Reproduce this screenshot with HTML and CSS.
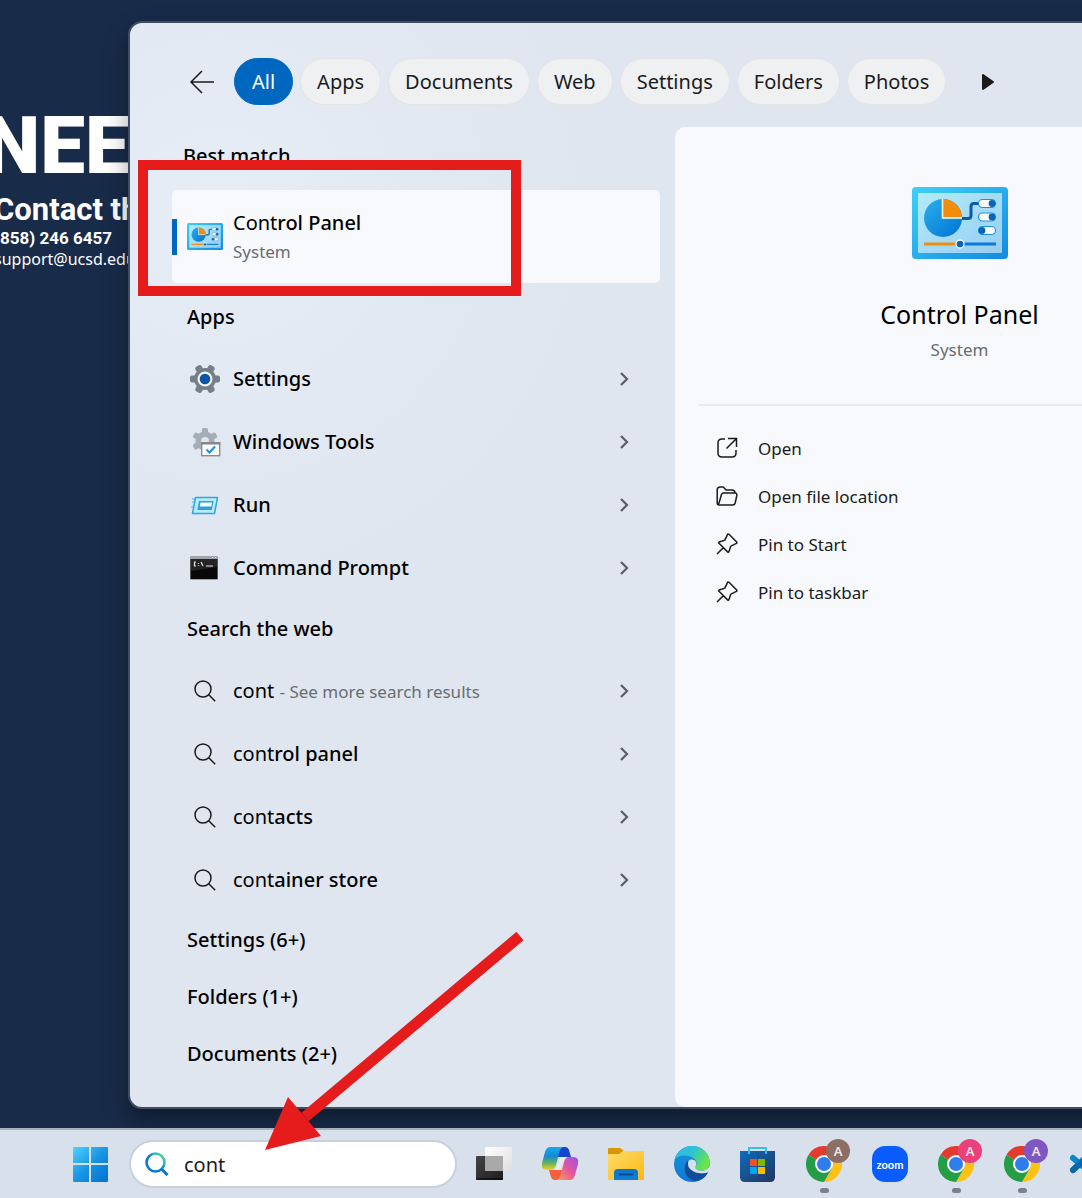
FILE: index.html
```html
<!DOCTYPE html>
<html lang="en">
<head>
  <meta charset="UTF-8" />
  <meta name="viewport" content="width=device-width, initial-scale=1" />
  <title>Search</title>
  <link rel="stylesheet" href="styles.css">
</head>
<body>
  <!-- Shared icons -->
  <svg class="sprite" aria-hidden="true">
    <defs>
      <linearGradient id="cpFrame" x1="0" y1="0" x2="1" y2="1">
        <stop offset="0" stop-color="#3fd0f8" /><stop offset="1" stop-color="#128be0" />
      </linearGradient>
      <linearGradient id="cpInner" x1="0" y1="0" x2="1" y2="1">
        <stop offset="0" stop-color="#b2ebfa" /><stop offset="1" stop-color="#97cdf2" />
      </linearGradient>
      <linearGradient id="cpPie" x1="0" y1="0" x2="1" y2="1">
        <stop offset="0" stop-color="#2bb0ea" /><stop offset="1" stop-color="#0072d4" />
      </linearGradient>
      <linearGradient id="winFill" x1="0" y1="0" x2="1" y2="1">
        <stop offset="0" stop-color="#4fd3ff" /><stop offset=".5" stop-color="#1a94e4" /><stop offset="1" stop-color="#0070d0" />
      </linearGradient>
      <linearGradient id="lensFill" x1="0" y1="1" x2="1" y2="0">
        <stop offset=".5" stop-color="#0a78d4" /><stop offset=".75" stop-color="#37c0b4" /><stop offset="1" stop-color="#65df70" />
      </linearGradient>
      <linearGradient id="darkPane" x1="0" y1="0" x2="1" y2="1">
        <stop offset="0" stop-color="#454545" /><stop offset="1" stop-color="#1d1d1d" />
      </linearGradient>
      <linearGradient id="lightPane" x1="0" y1="0" x2="1" y2="1">
        <stop offset="0" stop-color="#ffffff" /><stop offset="1" stop-color="#dedede" />
      </linearGradient>
      <linearGradient id="copLeft" x1="0" y1="0" x2="0" y2="1">
        <stop offset="0" stop-color="#17a9f2" /><stop offset=".4" stop-color="#1489d2" /><stop offset=".7" stop-color="#63b45d" /><stop offset="1" stop-color="#f5cf24" />
      </linearGradient>
      <linearGradient id="copRight" x1="1" y1="0" x2="0" y2="1">
        <stop offset="0" stop-color="#9a4ff0" /><stop offset=".5" stop-color="#e4579e" /><stop offset="1" stop-color="#ff9d5c" />
      </linearGradient>
      <linearGradient id="folderFill" x1="0" y1="0" x2="1" y2="1">
        <stop offset="0" stop-color="#ffdc6c" /><stop offset="1" stop-color="#fbb912" />
      </linearGradient>
      <linearGradient id="folderBlue" x1="0" y1="0" x2="0" y2="1">
        <stop offset="0" stop-color="#1173c8" /><stop offset="1" stop-color="#0a80d8" />
      </linearGradient>
      <linearGradient id="edgeTop" x1="0" y1="0" x2="1" y2="0.5">
        <stop offset="0" stop-color="#35b3ee" /><stop offset=".5" stop-color="#2cc3d2" /><stop offset="1" stop-color="#6be548" />
      </linearGradient>
      <linearGradient id="edgeBody" x1="0" y1="0" x2="0" y2="1">
        <stop offset="0" stop-color="#1595d8" /><stop offset="1" stop-color="#0f78d6" />
      </linearGradient>
      <linearGradient id="storeFill" x1="0" y1="0" x2="1" y2="1">
        <stop offset="0" stop-color="#0f6bbd" /><stop offset="1" stop-color="#21365f" />
      </linearGradient>
    </defs>
    <symbol id="control-panel" viewBox="0 0 96 72">
      <rect width="96" height="72" rx="4" fill="url(#cpFrame)" />
      <rect x="6" y="6" width="84" height="60" rx="1" fill="url(#cpInner)" />
      <path d="M48 31.500h8q3 0 3-3v-9q0-3 3-3h8" fill="none" stroke="#0b5ba8" stroke-width="3" />
      <circle cx="31" cy="31" r="19" fill="url(#cpPie)" />
      <path d="M31 12a19 19 0 0 1 19 19H31z" fill="#f28d0c" />
      <path d="M30.500 12v19H50" fill="none" stroke="#fff" stroke-width="1.500" />
      <g fill="#fff" stroke="#1991de" stroke-width="1.200">
        <rect x="66.500" y="12.500" width="17" height="8" rx="4" />
        <rect x="66.500" y="26" width="17" height="8" rx="4" />
        <rect x="66.500" y="39.500" width="17" height="8" rx="4" />
      </g>
      <g fill="#0a63b8">
        <circle cx="80" cy="16.500" r="3.400" /><circle cx="80" cy="30" r="3.400" /><circle cx="70" cy="43.500" r="3.400" />
      </g>
      <path d="M12 57h36" stroke="#f28d0c" stroke-width="3" />
      <path d="M48 57h36" stroke="#0a7ad6" stroke-width="3" />
      <circle cx="48" cy="57" r="4" fill="#0a63b8" stroke="#fff" stroke-width="1.300" />
    </symbol>
    <symbol id="search" viewBox="0 0 22 22">
      <circle cx="9" cy="9" r="8" fill="none" stroke="#1b1b1b" stroke-width="1.500" />
      <path d="M14.700 14.700l6.500 6.500" stroke="#1b1b1b" stroke-width="1.500" />
    </symbol>
    <symbol id="chevron" viewBox="0 0 10 16">
      <path d="M2 2l6 6-6 6" fill="none" stroke="#5b5e62" stroke-width="2.200" />
    </symbol>
    <symbol id="gear" viewBox="0 0 30 30">
      <circle cx="15" cy="15" r="11" />
      <rect x="0" y="11.500" width="30" height="7" rx="2" />
      <rect x="0" y="11.500" width="30" height="7" rx="2" transform="rotate(60 15 15)" />
      <rect x="0" y="11.500" width="30" height="7" rx="2" transform="rotate(120 15 15)" />
    </symbol>
    <symbol id="pin" viewBox="0 0 22 22">
      <path d="M1 21l6.500-6.500M13 1.300l7.700 7.700q.6.800-.3 1.400l-5.600 2.800-1.900 5.500q-.5 1-1.300.2L3 10.300q-.7-.8.300-1.300l5.500-1.900 2.700-5.500q.6-1 1.500-.3z" fill="none" stroke="#1b1b1b" stroke-width="1.500" />
    </symbol>
    <symbol id="chrome" viewBox="0 0 36 36">
      <path d="M18 18L2.400 9A18 18 0 0 1 33.600 9z" fill="#e53b2e" />
      <path d="M18 18l-.1 18A18 18 0 0 1 2.400 9z" fill="#259c46" />
      <path d="M18 9h15.600A18 18 0 0 1 18 36l7.800-13.500z" fill="#fcc116" />
      <path d="M10.200 22.500L18 36l7.800-13.500z" fill="#259c46" />
      <circle cx="18" cy="18" r="9" fill="#fff" />
      <circle cx="18" cy="18" r="7" fill="#2f7cee" />
    </symbol>
  </svg>

  <main class="desktop">
    <div class="wallpaper">
      <p class="wall-title">NEED HELP?</p>
      <p class="wall-contact">Contact the</p>
      <p class="wall-phone">(858) 246 6457</p>
      <p class="wall-mail">support@ucsd.edu</p>
    </div>

    <div class="search-window">
      <nav class="filters">
        <button class="icon-btn back" aria-label="Back">
          <svg width="26" height="24" viewBox="0 0 26 24"><path d="M25 12H2M13 1L2 12l11 11" fill="none" stroke="#1b1b1b" stroke-width="1.500" /></svg>
        </button>
        <button class="chip active">All</button>
        <button class="chip">Apps</button>
        <button class="chip">Documents</button>
        <button class="chip">Web</button>
        <button class="chip">Settings</button>
        <button class="chip">Folders</button>
        <button class="chip">Photos</button>
        <button class="icon-btn more" aria-label="More filters">
          <svg width="14" height="18" viewBox="0 0 14 18"><path d="M2 2l10 7-10 7z" fill="#1b1b1b" stroke="#1b1b1b" stroke-width="2" stroke-linejoin="round" /></svg>
        </button>
      </nav>

      <div class="panes">
        <section class="results">
          <h2 class="best-title">Best match</h2>
          <button class="row best">
            <svg class="row-icon"><use href="#control-panel" /></svg>
            <span class="row-text"><span>Cont<b>rol Panel</b></span><small>System</small></span>
          </button>

          <h2 class="group-title">Apps</h2>
          <button class="row">
            <svg class="row-icon" viewBox="0 0 36 36">
              <use href="#gear" x="3" y="3" width="30" height="30" fill="#757f87" />
              <circle cx="18" cy="18" r="7.500" fill="#f0f2f4" /><circle cx="18" cy="18" r="5.300" fill="#0b54a8" />
            </svg>
            <span class="row-text"><b>Settings</b></span>
            <svg class="chevron"><use href="#chevron" /></svg>
          </button>
          <button class="row">
            <svg class="row-icon" viewBox="0 0 36 36">
              <use href="#gear" x="5" y="4" width="26" height="26" fill="#a5adb6" transform="rotate(30 18 17)" />
              <circle cx="18" cy="17" r="4" fill="#dfe6f0" />
              <rect x="14.700" y="18.700" width="18" height="13" fill="#fdfdfd" stroke="#8c8c8c" stroke-width="1.400" />
              <path d="M14 19.500h19.400" stroke="#858585" stroke-width="2" />
              <path d="M19.500 25.500l3 3 5.500-6" fill="none" stroke="#1e8fe0" stroke-width="2" />
            </svg>
            <span class="row-text"><b>Windows Tools</b></span>
            <svg class="chevron"><use href="#chevron" /></svg>
          </button>
          <button class="row">
            <svg class="row-icon" viewBox="0 0 36 36">
              <path d="M5 12h4M5 15h3M4 20h3" stroke="#7cc9f0" stroke-width="1.500" />
              <path d="M8.500 10.500h22l-3 16h-22z" fill="#b9ecfb" stroke="#2aa7e6" stroke-width="1.500" stroke-linejoin="round" />
              <path d="M12 14h14.500l-1.600 9H10.300z" fill="#2f9fe0" />
              <path d="M13.500 15.500H25l-.6 4H12.800z" fill="#f4fcff" />
            </svg>
            <span class="row-text"><b>Run</b></span>
            <svg class="chevron"><use href="#chevron" /></svg>
          </button>
          <button class="row">
            <svg class="row-icon" viewBox="0 0 36 36">
              <rect x="3" y="6" width="28" height="24" rx="1" fill="#9fa4aa" />
              <path d="M25 7.500h1M28 7.500h1" stroke="#fff" />
              <rect x="3.500" y="9" width="27" height="20" fill="#090909" />
              <path d="M4 9h26v8L4 21z" fill="#242424" />
              <path d="M9 12H7.500v4H9M11.500 13v.8M11.500 15v.8M14 12l2 4M19 16h7" fill="none" stroke="#e4e4e4" stroke-width="1.200" />
            </svg>
            <span class="row-text"><b>Command Prompt</b></span>
            <svg class="chevron"><use href="#chevron" /></svg>
          </button>

          <h2 class="group-title">Search the web</h2>
          <button class="row">
            <svg class="row-icon glass"><use href="#search" /></svg>
            <span class="row-text"><span>cont <small>- See more search results</small></span></span>
            <svg class="chevron"><use href="#chevron" /></svg>
          </button>
          <button class="row">
            <svg class="row-icon glass"><use href="#search" /></svg>
            <span class="row-text"><span>cont<b>rol panel</b></span></span>
            <svg class="chevron"><use href="#chevron" /></svg>
          </button>
          <button class="row">
            <svg class="row-icon glass"><use href="#search" /></svg>
            <span class="row-text"><span>cont<b>acts</b></span></span>
            <svg class="chevron"><use href="#chevron" /></svg>
          </button>
          <button class="row">
            <svg class="row-icon glass"><use href="#search" /></svg>
            <span class="row-text"><span>cont<b>ainer store</b></span></span>
            <svg class="chevron"><use href="#chevron" /></svg>
          </button>

          <div class="more-groups">
            <h2 class="group-title">Settings (6+)</h2>
            <h2 class="group-title">Folders (1+)</h2>
            <h2 class="group-title">Documents (2+)</h2>
          </div>
        </section>

        <section class="preview">
          <div class="hero">
            <svg class="hero-icon"><use href="#control-panel" /></svg>
            <h1>Control Panel</h1>
            <p>System</p>
          </div>
          <div class="actions">
            <button class="action">
              <svg viewBox="0 0 22 22"><path d="M9 2H6Q2 2 2 6v10q0 4 4 4h10q4 0 4-4v-3M12 1.500h8.500V10M20 2l-9.500 9.500" fill="none" stroke="#1b1b1b" stroke-width="1.500" /></svg>
              Open
            </button>
            <button class="action">
              <svg viewBox="0 0 22 22"><path d="M1.200 18V5q0-3 3-3h3l3 3H16q3 0 3 3M1.200 18q0 2 2 2h13.500q2 0 2.500-2l1.600-7.500Q21.200 8 19 8H7.500Q6 8 5.500 9.500L3 18q-.6 2-1.600 1" fill="none" stroke="#1b1b1b" stroke-width="1.500" /></svg>
              Open file location
            </button>
            <button class="action"><svg><use href="#pin" /></svg>Pin to Start</button>
            <button class="action"><svg><use href="#pin" /></svg>Pin to taskbar</button>
          </div>
        </section>
      </div>
    </div>
  </main>

  <footer class="taskbar">
    <button class="task" aria-label="Start">
      <svg viewBox="0 0 36 36"><path d="M2 1h15v16H1V2q0-1 1-1zM19 1h16q1 0 1 1v15H19zM1 19h16v17H2q-1 0-1-1zM19 19h17v16q0 1-1 1H19z" fill="url(#winFill)" /></svg>
    </button>
    <label class="search-box">
      <svg width="24" height="24" viewBox="0 0 24 24" aria-hidden="true">
        <path d="M16.500 17l6 6" stroke="#0a74d0" stroke-width="3" />
        <circle cx="10.500" cy="10.500" r="9" fill="none" stroke="url(#lensFill)" stroke-width="2.600" />
      </svg>
      <input type="text" value="cont" aria-label="Search" />
    </label>
    <div class="apps">
      <button class="task" aria-label="Task view">
        <svg viewBox="0 0 36 36">
          <rect y="10" width="27" height="24" rx="1" fill="url(#darkPane)" /><path d="M0 33h27" stroke="#000" />
          <rect x="9" y="1" width="27" height="24" rx="1" fill="url(#lightPane)" />
          <path d="M9 10h18v15H9z" fill="#a9a9a9" />
        </svg>
      </button>
      <button class="task" aria-label="Copilot">
        <svg viewBox="0 0 36 36">
          <path d="M15 1h8q3 0 4 3l2 7H15z" fill="#1746ca" />
          <path d="M21 34h-8q-3 0-4-3l-2-7h14z" fill="#f4603c" />
          <path d="M18.700 11h5L18 24h-4.500z" fill="#e6ebf4" />
          <path d="M8 1h13q-2.500 1-3.500 4.500L14 19q-1.500 5-5.500 5H5q-6.500 0-5-7L3 6q1.500-5 5-5z" fill="url(#copLeft)" />
          <path d="M28 34H15q2.500-1 3.500-4.500L22 16q1.500-5 5.500-5H31q6.500 0 5 7l-3 11q-1.500 5-5 5z" fill="url(#copRight)" />
        </svg>
      </button>
      <button class="task" aria-label="File Explorer">
        <svg viewBox="0 0 36 36">
          <path d="M0 3q0-1 1-1h11l4 3-3 3H0z" fill="#d99600" />
          <path d="M0 8h11l4-3h20q1 0 1 1v28H0z" fill="url(#folderFill)" />
          <path d="M6 34v-7q0-4 4-4h16q4 0 4 4v7z" fill="url(#folderBlue)" />
          <path d="M11 28.500h14" stroke="#0a4788" stroke-width="1.800" />
        </svg>
      </button>
      <button class="task" aria-label="Edge">
        <svg viewBox="0 0 36 36">
          <circle cx="18" cy="18" r="18" fill="url(#edgeBody)" />
          <path d="M14 14C7 22 12 35 23 35q7-1 11-8.500-8 3-14-1-6-4-6-11.500z" fill="#104e9a" />
          <path d="M.5 14C3 5 10 0 18 0c11 0 18 8 18 17 0 6-6 8.500-11 7.500-4-.7-4-2.500-3-4.500 2-4-1-8-6-9.500C9 8.500 4 10 .5 14z" fill="url(#edgeTop)" />
          <path d="M17.500 13.500c4 0 5.500 3 4.500 6-1 2-1 4 3 5 4 .8 9-.5 11-5v7.500l-2-.8C27 29 14 26 14 18c0-3 1-4.500 3.500-4.500z" fill="#d8e0ec" />
        </svg>
      </button>
      <button class="task" aria-label="Microsoft Store">
        <svg viewBox="0 0 36 36">
          <path d="M0 5h35v26q0 5-5 5H5q-5 0-5-5z" fill="url(#storeFill)" />
          <path d="M9 8V2h17v6" fill="none" stroke="#2fc1f5" stroke-width="2" />
          <path d="M10 13h7v7h-7z" fill="#f25022" /><path d="M18 13h7v7h-7z" fill="#7fba00" />
          <path d="M10 21h7v7h-7z" fill="#00a4ef" /><path d="M18 21h7v7h-7z" fill="#ffb900" />
        </svg>
      </button>
      <button class="task running" aria-label="Chrome, work">
        <svg><use href="#chrome" /></svg><span class="badge brown">A</span>
      </button>
      <button class="task zoom">zoom</button>
      <button class="task running" aria-label="Chrome, personal">
        <svg><use href="#chrome" /></svg><span class="badge pink">A</span>
      </button>
      <button class="task running" aria-label="Chrome, school">
        <svg><use href="#chrome" /></svg><span class="badge purple">A</span>
      </button>
      <button class="task" aria-label="Code">
        <svg viewBox="0 0 36 36"><path d="M3 12l13 11M3 24l13-13" stroke="#0b84cc" stroke-width="6" stroke-linecap="round" /><path d="M3 24l9-8" stroke="#0867a8" stroke-width="6" stroke-linecap="round" /></svg>
      </button>
    </div>
  </footer>

  <!-- Callouts drawn over the screen -->
  <div class="callout-box"></div>
  <svg class="callout-arrow" viewBox="0 0 260 220" aria-hidden="true">
    <path d="M255 4L40 185" stroke="#e61c1c" stroke-width="11" />
    <path d="M0 218L23 165l33 39z" fill="#e61c1c" />
  </svg>
</body>
</html>
```

FILE: styles.css
```css
html, body {
  margin: 0;
  padding: 0;
}

body {
  position: relative;
  min-height: 100vh;
  display: flex;
  flex-direction: column;
  overflow: hidden;
  background: #182b49;
  color: #000;
  font-family: 'Segoe UI', 'Noto Sans', 'Open Sans', sans-serif;
  font-size: 20px;
}

h1, h2, p {
  margin: 0;
}

button {
  padding: 0;
  border: none;
  background: none;
  color: inherit;
  font: inherit;
  cursor: pointer;
}

svg {
  display: block;
  flex: none;
}

b {
  font-weight: 500;
}

.sprite {
  position: absolute;
  width: 0;
  height: 0;
}

/* Desktop */
.desktop {
  flex: 1;
  display: flex;
  overflow: hidden;
  padding: 21px 0 19px;
}

.wallpaper {
  flex: none;
  width: 128px;
  padding-top: 80px;
  color: #fff;
  white-space: nowrap;
}

.wallpaper p {
  margin-left: -6px;
}

.wallpaper .wall-title {
  margin-left: -16px;
  font-family: 'Liberation Sans Narrow', 'Roboto', sans-serif;
  font-size: 80px;
  font-weight: 900;
  line-height: 90px;
}

.wall-contact {
  font-family: 'Roboto', sans-serif;
  font-size: 31px;
  font-weight: 700;
  line-height: 38px;
}

.wall-phone {
  font-family: 'Roboto', sans-serif;
  font-size: 17px;
  font-weight: 700;
  line-height: 18px;
}

.wall-mail {
  font-size: 16px;
  line-height: 24px;
}

/* Search window */
.search-window {
  position: relative;
  flex: 1 0 auto;
  display: flex;
  flex-direction: column;
  box-sizing: border-box;
  border: 2px solid #414d61;
  border-radius: 14px;
  background: radial-gradient(circle at 90px 190px, #e6edf6, #dfe6f0 360px);
  box-shadow: 0 12px 24px rgba(0, 0, 0, 0.35);
}

.filters {
  display: flex;
  align-items: center;
  gap: 7px;
  padding: 35px 0 22px 59px;
}

.icon-btn {
  display: flex;
}

.back {
  margin-right: 12px;
}

.more {
  margin-left: 28px;
}

.chip {
  height: 47px;
  box-sizing: border-box;
  padding: 0 16px;
  border: 1px solid #e2e4e7;
  border-radius: 24px;
  background: #eff0f2;
  color: #1b1b1b;
}

.chip.active {
  padding: 0 17px;
  border-color: #0067c0;
  background: #0067c0;
  color: #fff;
}

.panes {
  flex: 1;
  display: flex;
  gap: 15px;
  padding-left: 42px;
}

.results {
  width: 488px;
}

.best-title, .group-title {
  padding-left: 15px;
  font-size: 20px;
  font-weight: 500;
  line-height: 57px;
}

.best-title {
  padding-left: 11px;
  margin-bottom: 6px;
}

.row + .group-title {
  line-height: 60px;
}

.best + .group-title {
  padding-top: 4px;
}

.row {
  display: flex;
  align-items: center;
  gap: 10px;
  width: 100%;
  height: 63px;
  padding: 0 31px 0 15px;
  text-align: left;
}

.best {
  height: 93px;
  border-radius: 5px;
  background: linear-gradient(#0067c0, #0067c0) 0 50% / 5px 36px no-repeat, #f7f9fc;
}

.row-icon {
  width: 36px;
  height: 36px;
}

.best .row-icon {
  height: 27px;
}

.glass {
  box-sizing: border-box;
  padding: 7px;
}

.row-text {
  flex: 1;
  display: flex;
  flex-direction: column;
  line-height: 29px;
}

.row-text small {
  color: #6a6d71;
  font-size: 17px;
}

.chevron {
  width: 10px;
  height: 16px;
}

/* Preview pane */
.preview {
  width: 569px;
  box-sizing: border-box;
  padding: 60px 24px 0;
  border-radius: 10px;
  background: #f7f9fc;
}

.hero {
  display: flex;
  flex-direction: column;
  align-items: center;
  padding-bottom: 36px;
  border-bottom: 2px solid #e7e9ec;
}

.hero-icon {
  width: 96px;
  height: 72px;
  margin-bottom: 37px;
}

.hero h1 {
  font-size: 25px;
  font-weight: 400;
  line-height: 36px;
}

.hero p {
  color: #6a6d71;
  font-size: 17px;
  line-height: 36px;
}

.actions {
  padding: 18px 0 0 17px;
}

.action {
  display: flex;
  align-items: center;
  gap: 20px;
  width: 100%;
  height: 48px;
  color: #1b1b1b;
  font-size: 17px;
}

.action svg {
  width: 22px;
  height: 22px;
}

/* Taskbar */
.taskbar {
  display: flex;
  align-items: center;
  height: 68px;
  padding-left: 72px;
  border-top: 2px solid #a9afba;
  background: #d8e0ec;
}

.task {
  position: relative;
  flex: none;
  width: 36px;
  height: 36px;
}

.task svg {
  width: 36px;
  height: 36px;
}

.search-box {
  flex: none;
  display: flex;
  align-items: center;
  gap: 15px;
  width: 328px;
  height: 48px;
  box-sizing: border-box;
  margin: 0 19px 0 21px;
  padding: 0 14px;
  border: 2px solid #c8d0df;
  border-radius: 24px;
  background: #fff;
}

.search-box input {
  flex: 1;
  min-width: 0;
  padding: 0;
  border: none;
  outline: none;
  background: none;
  color: #1b1b1b;
  font: inherit;
}

.apps {
  display: flex;
  gap: 30px;
}

.running::after {
  content: '';
  position: absolute;
  left: 14px;
  bottom: -11px;
  width: 9px;
  height: 5px;
  border-radius: 3px;
  background: #7c8088;
}

.badge {
  position: absolute;
  top: -7px;
  left: 20px;
  width: 24px;
  height: 24px;
  border-radius: 50%;
  color: #f0e6ea;
  font-size: 13px;
  font-weight: 600;
  line-height: 24px;
  text-align: center;
}

.brown {
  background: #8d6e63;
}

.pink {
  background: #ec407a;
}

.purple {
  background: #7e57c2;
}

.zoom {
  border-radius: 13px;
  background: #0b5cff;
  color: #fff;
  font-family: 'Lato', sans-serif;
  font-size: 11px;
  font-weight: 700;
}

/* Callouts */
.callout-box {
  position: absolute;
  top: 160px;
  left: 138px;
  width: 383px;
  height: 136px;
  box-sizing: border-box;
  border: 10px solid #e61c1c;
  pointer-events: none;
}

.callout-arrow {
  position: absolute;
  bottom: 46px;
  left: 265px;
  width: 260px;
  height: 220px;
  pointer-events: none;
}
```
